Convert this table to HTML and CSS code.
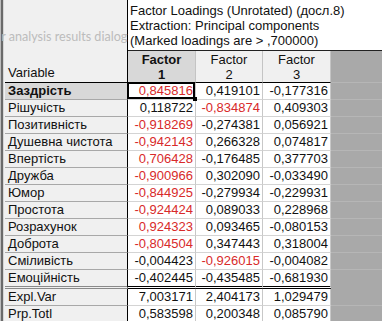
FILE: index.html
```html
<!DOCTYPE html>
<html>
<head>
<meta charset="utf-8">
<link rel="stylesheet" href="styles.css">
</head>
<body>
<div class="sheet">
  <div class="edge"></div>
  <div class="corner">Variable</div>
  <div class="title">Factor Loadings (Unrotated) (досл.8)<br>Extraction: Principal components<br>(Marked loadings are &gt; ,700000)</div>

  <div class="head sel">Factor<br>1</div>
  <div class="head">Factor<br>2</div>
  <div class="head">Factor<br>3</div>
  <div class="gray"></div>

  <div class="name selname">Заздрість</div>
  <div class="num red cur">0,845816</div>
  <div class="num">0,419101</div>
  <div class="num">-0,177316</div>
  <div class="gray"></div>

  <div class="name">Рішучість</div>
  <div class="num">0,118722</div>
  <div class="num red">-0,834874</div>
  <div class="num">0,409303</div>
  <div class="gray"></div>

  <div class="name">Позитивність</div>
  <div class="num red">-0,918269</div>
  <div class="num">-0,274381</div>
  <div class="num">0,056921</div>
  <div class="gray"></div>

  <div class="name">Душевна чистота</div>
  <div class="num red">-0,942143</div>
  <div class="num">0,266328</div>
  <div class="num">0,074817</div>
  <div class="gray"></div>

  <div class="name">Впертість</div>
  <div class="num red">0,706428</div>
  <div class="num">-0,176485</div>
  <div class="num">0,377703</div>
  <div class="gray"></div>

  <div class="name">Дружба</div>
  <div class="num red">-0,900966</div>
  <div class="num">0,302090</div>
  <div class="num">-0,033490</div>
  <div class="gray"></div>

  <div class="name">Юмор</div>
  <div class="num red">-0,844925</div>
  <div class="num">-0,279934</div>
  <div class="num">-0,229931</div>
  <div class="gray"></div>

  <div class="name">Простота</div>
  <div class="num red">-0,924424</div>
  <div class="num">0,089033</div>
  <div class="num">0,228968</div>
  <div class="gray"></div>

  <div class="name">Розрахунок</div>
  <div class="num red">0,924323</div>
  <div class="num">0,093465</div>
  <div class="num">-0,080153</div>
  <div class="gray"></div>

  <div class="name">Доброта</div>
  <div class="num red">-0,804504</div>
  <div class="num">0,347443</div>
  <div class="num">0,318004</div>
  <div class="gray"></div>

  <div class="name">Сміливість</div>
  <div class="num">-0,004423</div>
  <div class="num red">-0,926015</div>
  <div class="num">-0,004082</div>
  <div class="gray"></div>

  <div class="name last">Емоційність</div>
  <div class="num last">-0,402445</div>
  <div class="num last">-0,435485</div>
  <div class="num last">-0,681930</div>
  <div class="gray lastgray"></div>

  <div class="name">Expl.Var</div>
  <div class="num">7,003171</div>
  <div class="num">2,404173</div>
  <div class="num">1,029479</div>
  <div class="gray"></div>

  <div class="name">Prp.Totl</div>
  <div class="num">0,583598</div>
  <div class="num">0,200348</div>
  <div class="num">0,085790</div>
  <div class="gray"></div>

  <div class="ghost">or analysis results dialog</div>
</div>
</body>
</html>
```

FILE: styles.css
```css
* { box-sizing: border-box; }
html, body { margin: 0; padding: 0; background: #fff; }
body { width: 382px; height: 321px; overflow: hidden; }

.sheet {
  position: relative;
  display: grid;
  grid-template-columns: 5px 123px 68px 67px 68px 51px;
  grid-template-rows: 51px 32px repeat(11, 17px) 19px 17px 16px;
  width: 382px;
  font-family: "Liberation Sans", Arial, sans-serif;
  font-size: 13px;
  line-height: 16px;
  color: #111;
}

.edge {
  grid-row: 1 / -1;
  grid-column: 1;
  background: linear-gradient(to right, #bdbdbd 0 1px, #6a6a6a 1px 3px, #d6d6d6 3px 4px, #f0f0f0 4px 5px);
}

.corner {
  grid-row: span 2;
  background: #f0f0f0;
  border-right: 1px solid #000;
  border-bottom: 1px solid #000;
  display: flex;
  align-items: flex-end;
  padding: 0 0 1px 3px;
}

.title {
  grid-column: span 4;
  background: #fff;
  border-bottom: 1px solid #222;
  padding: 3px 0 0 2px;
  line-height: 15px;
  white-space: nowrap;
}

.head {
  background: #f0f0f0;
  border-right: 1px solid #c4c4c4;
  border-bottom: 1px solid #000;
  text-align: center;
  line-height: 15px;
  padding-top: 1px;
}
.head.sel { background: #d8d8d8; font-weight: bold; }

.gray {
  background: #a9a9a9;
  border-bottom: 1px solid #b6b6b6;
}
.lastgray { border-bottom: 3px solid #a9a9a9; }

.name {
  background: #f0f0f0;
  border-right: 1px solid #000;
  border-bottom: 1px solid #a8a8a8;
  padding-left: 3px;
  white-space: nowrap;
}
.selname { background: #d8d8d8; font-weight: bold; }

.num {
  background: #fff;
  border-right: 1px solid #c8c8c8;
  border-bottom: 1px solid #d4d4d4;
  text-align: right;
  padding-right: 2px;
}
.red { color: #d82a2a; }

.last { border-bottom: 3px double #000; }
.name.last { border-bottom: 3px double #8a8a8a; }

.cur { position: relative; }
.cur::before {
  content: "";
  position: absolute;
  left: -1px; top: -1px; right: 0; bottom: 0;
  border: 2px solid #000;
}
.cur::after {
  content: "";
  position: absolute;
  right: -2px; bottom: -2px;
  width: 4px; height: 4px;
  background: #000;
}

.ghost {
  position: absolute;
  left: -6px;
  top: 29px;
  font-family: Lato, "Open Sans", sans-serif;
  font-size: 12.6px;
  line-height: 16px;
  color: #bcbcbc;
  white-space: nowrap;
}
```
